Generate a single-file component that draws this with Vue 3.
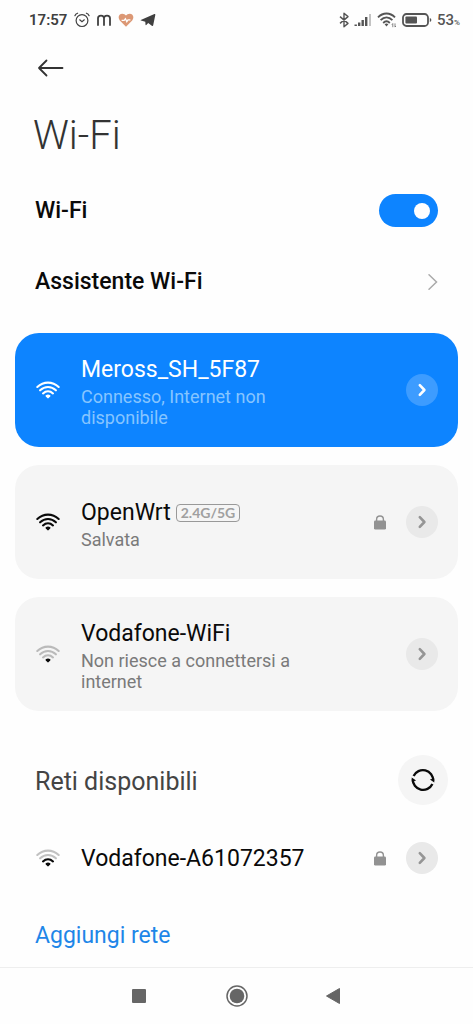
<script setup>
import { h, ref } from 'vue'

const enabled = ref(true)

const saved = [
  { name: 'Meross_SH_5F87', status: 'Connesso, Internet non disponibile', level: 4, active: true },
  { name: 'OpenWrt', status: 'Salvata', level: 4, band: '2.4G/5G', locked: true },
  { name: 'Vodafone-WiFi', status: 'Non riesce a connettersi a internet', level: 1 }
]
const available = [{ name: 'Vodafone-A61072357', level: 2, locked: true }]

const arcs = [
  { level: 4, d: 'M1.3 6C7.6 .1 16.4 .1 22.7 6' },
  { level: 3, d: 'M4.1 9.3C8.8 4.9 15.2 4.9 19.9 9.3' },
  { level: 2, d: 'M7 12.4C10 9.6 14 9.6 17 12.4' }
]

// Signal strength from 1 (dot only) to 4 (all arcs lit)
const Signal = ({ level }) =>
  h('svg', { viewBox: '0 0 24 18', 'aria-hidden': 'true' }, [
    ...arcs.map((a) =>
      h('path', {
        d: a.d,
        fill: 'none',
        stroke: 'currentColor',
        'stroke-width': 2.1,
        'stroke-linecap': 'round',
        opacity: level >= a.level ? 1 : 0.25
      })
    ),
    h('path', {
      d: 'M9.8 14.2Q12 12.8 14.2 14.2Q14.8 14.8 14.2 15.5L12.7 17.1Q12 17.8 11.3 17.1L9.8 15.5Q9.2 14.8 9.8 14.2Z',
      fill: 'currentColor'
    })
  ])
Signal.props = ['level']

const Lock = () =>
  h('svg', { viewBox: '0 0 14 15', 'aria-hidden': 'true' }, [
    h('path', { d: 'M3.6 6V4.4a3.4 3.4 0 0 1 6.8 0V6', fill: 'none', stroke: 'currentColor', 'stroke-width': 1.4 }),
    h('rect', { x: 1, y: 5.6, width: 12, height: 9, rx: 1.4, fill: 'currentColor' })
  ])

const Chevron = () =>
  h('svg', { viewBox: '0 0 10 14', 'aria-hidden': 'true' }, [
    h('path', {
      d: 'M2.8 2.2L7.4 7L2.8 11.8',
      fill: 'none',
      stroke: 'currentColor',
      'stroke-width': 2.6,
      'stroke-linecap': 'round',
      'stroke-linejoin': 'round'
    })
  ])
</script>

<template>
  <div class="screen">
    <header class="status">
      <div class="status-left">
        <span class="clock">17:57</span>
        <svg class="i16" viewBox="0 0 16 16" fill="none" stroke="currentColor" stroke-width="1.2" stroke-linecap="round">
          <circle cx="8" cy="8.6" r="5.9" />
          <path d="M5.7 7.8L8 9.7L10.3 7.8M.9 3.7Q1.6 1.9 3.6 1.2M15.1 3.7Q14.4 1.9 12.4 1.2" />
        </svg>
        <svg class="i16" viewBox="0 0 16 16" fill="none" stroke="currentColor" stroke-width="1.8" stroke-linecap="round">
          <path d="M2 13V6.3Q2 3.6 5 3.6Q8 3.6 8 6.3V13M8 6.3Q8 3.6 11 3.6Q14 3.6 14 6.3V13" />
        </svg>
        <svg class="i16" viewBox="0 0 16 16">
          <path d="M8 14.8L1.8 8.5C-.6 5.4 1 1.7 4.3 1.7Q6.7 1.7 8 3.6Q9.3 1.7 11.7 1.7C15 1.7 16.6 5.4 14.2 8.5Z" fill="#dc9875" />
          <path d="M3.6 8.4H6.2L7.4 6.7L8.8 9.6L10 7.8H12.4" fill="none" stroke="#fff" stroke-width="1.3" />
        </svg>
        <svg class="i16" viewBox="0 0 16 16" fill="currentColor">
          <path d="M.8 8L14.4 2Q15.5 1.6 15.3 2.9L13.2 13.3Q12.9 14.5 11.8 13.8L8.2 11.1L6.3 13Q5.5 13.5 5.5 12.4L5.3 9.7L1 8.6Q.2 8.3 .8 8ZM6.1 9.3L11.8 5.2L7.1 10.1Z" />
        </svg>
      </div>
      <div class="status-right">
        <svg class="bt" viewBox="0 0 10 16" fill="none" stroke="currentColor" stroke-width="1.4" stroke-linejoin="round">
          <path d="M1 4.6L9 11.4L5 14.8V1.2L9 4.6L1 11.4" />
        </svg>
        <svg class="bars" viewBox="0 0 18 14" fill="currentColor">
          <path d="M.5 11.5h2.4v1.5h-2.4zM4 9.5h2.4V13H4zM7.5 7h2.4v6h-2.4zM11 4h2.4v9h-2.4z" />
          <path d="M15 1h2v12h-2z" opacity=".35" />
        </svg>
        <svg class="wifi-small" viewBox="0 0 20 16" fill="none" stroke="currentColor" stroke-width="1.9">
          <path d="M1 5.3C6 .2 13 .2 18 5.3M3.6 8.2C7.2 4.6 11.8 4.6 15.4 8.2M6.2 11C8.4 8.8 10.6 8.8 12.8 11" />
          <path d="M7.6 12.2Q9.5 10.6 11.4 12.2L9.5 14.4Z" fill="currentColor" stroke="none" />
          <path d="M15.8 15.2V11.6M14.9 12.6L15.8 11.5M18 11.4V15M18.9 14L18 15.1" stroke-width=".7" />
        </svg>
        <svg class="battery" viewBox="0 0 30 14">
          <rect x="1" y="1" width="25" height="12" rx="3.5" fill="none" stroke="currentColor" stroke-width="1.8" />
          <rect x="3.4" y="3.4" width="11.6" height="7.2" rx="1" fill="currentColor" />
          <path d="M27.8 5v4q1.6-.5 1.6-2t-1.6-2Z" fill="currentColor" />
        </svg>
        <span class="charge">53<small>%</small></span>
      </div>
    </header>

    <main>
      <button class="back" type="button" aria-label="Indietro">
        <svg viewBox="0 0 28 20" fill="none" stroke="currentColor" stroke-width="1.8" stroke-linecap="round" stroke-linejoin="round">
          <path d="M9.5 2.5L2 10L9.5 17.5M2 10H25.5" />
        </svg>
      </button>
      <h1>Wi-Fi</h1>

      <div class="setting">
        <label for="wifi-toggle">Wi-Fi</label>
        <input id="wifi-toggle" v-model="enabled" class="switch" type="checkbox" role="switch" />
      </div>
      <a class="setting" href="#assistente">
        <span>Assistente Wi-Fi</span>
        <svg class="thin-chevron" viewBox="0 0 12 18" fill="none" stroke="currentColor" stroke-width="1.5" stroke-linecap="round">
          <path d="M3 1.8L10.5 9L3 16.2" />
        </svg>
      </a>

      <ul class="cards">
        <li v-for="n in saved" :key="n.name" class="network card" :class="{ active: n.active }">
          <Signal class="signal" :level="n.level" />
          <div class="info">
            <div class="name">
              {{ n.name }}
              <span v-if="n.band" class="band">{{ n.band }}</span>
            </div>
            <p>{{ n.status }}</p>
          </div>
          <Lock v-if="n.locked" class="lock" />
          <button class="more" type="button" :aria-label="'Dettagli ' + n.name"><Chevron class="chevron" /></button>
        </li>
      </ul>

      <div class="section">
        <h2>Reti disponibili</h2>
        <button class="refresh" type="button" aria-label="Aggiorna">
          <svg viewBox="0 0 24 24" fill="none" stroke="currentColor" stroke-width="2.3">
            <path d="M2.6 8A10.3 10.3 0 0 1 22.2 12.8M21.4 16A10.3 10.3 0 0 1 1.8 11.2" />
            <path d="M18.9 11.6L23.3 10.2V14.4ZM5.1 12.4L.7 13.8V9.6Z" fill="currentColor" stroke="none" />
          </svg>
        </button>
      </div>
      <ul>
        <li v-for="n in available" :key="n.name" class="network plain">
          <Signal class="signal" :level="n.level" />
          <div class="info"><div class="name">{{ n.name }}</div></div>
          <Lock v-if="n.locked" class="lock" />
          <button class="more" type="button" :aria-label="'Dettagli ' + n.name"><Chevron class="chevron" /></button>
        </li>
      </ul>
      <a class="add" href="#aggiungi">Aggiungi rete</a>
    </main>

    <nav>
      <button type="button" aria-label="Recenti">
        <svg viewBox="0 0 24 24"><rect x="4" y="5" width="14" height="14" rx="1" fill="currentColor" /></svg>
      </button>
      <button type="button" aria-label="Home">
        <svg viewBox="0 0 24 24">
          <circle cx="12" cy="12" r="10" fill="none" stroke="currentColor" stroke-width="1.5" />
          <circle cx="12" cy="12" r="7.3" fill="currentColor" />
        </svg>
      </button>
      <button type="button" aria-label="Indietro">
        <svg viewBox="0 0 24 24"><path d="M4.5 12L17.5 4.5V19.5Z" fill="currentColor" stroke="currentColor" stroke-linejoin="round" /></svg>
      </button>
    </nav>
  </div>
</template>

<style>
body {
  margin: 0;
  background: #fefefe;
}
</style>

<style scoped>
.screen {
  display: flex;
  flex-direction: column;
  min-height: 100vh;
  font-family: Roboto, 'Liberation Sans', sans-serif;
  color: #0a0a0a;
}
svg {
  display: block;
  flex: none;
}
ul,
h1,
h2,
p {
  margin: 0;
  padding: 0;
  list-style: none;
}
button {
  display: flex;
  align-items: center;
  justify-content: center;
  padding: 0;
  border: 0;
  background: none;
  color: inherit;
}
a {
  color: inherit;
  text-decoration: none;
}
.status,
.status-left,
.status-right {
  display: flex;
  align-items: center;
}
.status {
  justify-content: space-between;
  height: 40px;
  padding: 0 13px 0 29px;
  color: #404040;
}
.status-left {
  gap: 6px;
}
.status-right {
  gap: 5px;
  color: #555;
}
.clock {
  padding-right: 1px;
  font-size: 15px;
  font-weight: 600;
}
.i16 {
  width: 16px;
  height: 16px;
}
.bt {
  width: 10px;
  height: 16px;
}
.bars {
  width: 18px;
  height: 14px;
}
.wifi-small {
  width: 20px;
  height: 16px;
}
.battery {
  width: 30px;
  height: 14px;
}
.charge {
  font-size: 15px;
  font-weight: 500;
}
.charge small {
  font-size: 8px;
}
.back {
  width: 28px;
  height: 20px;
  margin: 18px 0 0 37px;
  color: #333;
}
.back svg {
  width: 28px;
  height: 20px;
}
h1 {
  margin: 34px 33px 0;
  font-size: 40px;
  line-height: 48px;
  font-weight: 300;
  color: #333;
}
.setting {
  display: flex;
  align-items: center;
  justify-content: space-between;
  height: 71px;
  padding: 0 35px;
  font-size: 23px;
  font-weight: 500;
}
h1 + .setting {
  margin-top: 15px;
}
.switch {
  display: flex;
  align-items: center;
  justify-content: flex-start;
  appearance: none;
  width: 59px;
  height: 33px;
  margin: 0;
  padding: 0 8px;
  border-radius: 17px;
  background: #ddd;
}
.switch::before {
  content: '';
  width: 16px;
  height: 16px;
  border-radius: 50%;
  background: #fff;
}
.switch:checked {
  justify-content: flex-end;
  background: #0d84ff;
}
.thin-chevron {
  width: 12px;
  height: 18px;
  color: #aaa;
}
.cards {
  display: flex;
  flex-direction: column;
  gap: 18px;
  padding: 16px 15px 0;
}
.network {
  display: flex;
  align-items: center;
}
.card {
  min-height: 114px;
  padding: 0 20px;
  border-radius: 24px;
  background: #f5f5f5;
}
.card.active {
  background: #0d84ff;
  color: #fff;
}
.plain {
  min-height: 78px;
  padding: 0 35px;
}
.signal {
  width: 26px;
  height: 18px;
}
.info {
  flex: 1;
  min-width: 0;
  padding: 2px 0 0 20px;
}
.name {
  display: flex;
  align-items: center;
  gap: 5px;
  font-size: 23px;
  line-height: 32px;
}
.info p {
  max-width: 220px;
  font-size: 18px;
  line-height: 21px;
  color: #7a7a7a;
}
.active .info p {
  color: #86c5ff;
}
.band {
  padding: 0 4px;
  border: 1px solid #999;
  border-radius: 4px;
  font-family: Lato, sans-serif;
  font-size: 14px;
  line-height: 16px;
  font-weight: 700;
  color: #a0a0a0;
}
.lock {
  width: 14px;
  height: 15px;
  margin-right: 19px;
  color: #929292;
}
.more {
  flex: none;
  width: 32px;
  height: 32px;
  border-radius: 50%;
  background: #e9e9e9;
  color: #959595;
}
.active .more {
  background: #3d9cff;
  color: #fff;
}
.chevron {
  width: 10px;
  height: 14px;
}
.section {
  display: flex;
  align-items: center;
  justify-content: space-between;
  height: 78px;
  margin-top: 30px;
  padding: 0 25px 0 35px;
}
h2 {
  padding-top: 2px;
  font-size: 25px;
  font-weight: 400;
  color: #444;
}
.refresh {
  width: 50px;
  height: 50px;
  border-radius: 50%;
  background: #f5f5f5;
  color: #0a0a0a;
}
.refresh svg {
  width: 24px;
  height: 24px;
}
.add {
  display: flex;
  align-items: center;
  height: 60px;
  margin-top: 8px;
  padding: 0 35px;
  font-size: 23px;
  color: #1e86e8;
}
nav {
  display: flex;
  justify-content: center;
  gap: 73px;
  height: 56px;
  margin-top: auto;
  border-top: 1px solid #eee;
  color: #666;
}
nav button {
  width: 24px;
}
nav svg {
  width: 24px;
  height: 24px;
}
</style>
